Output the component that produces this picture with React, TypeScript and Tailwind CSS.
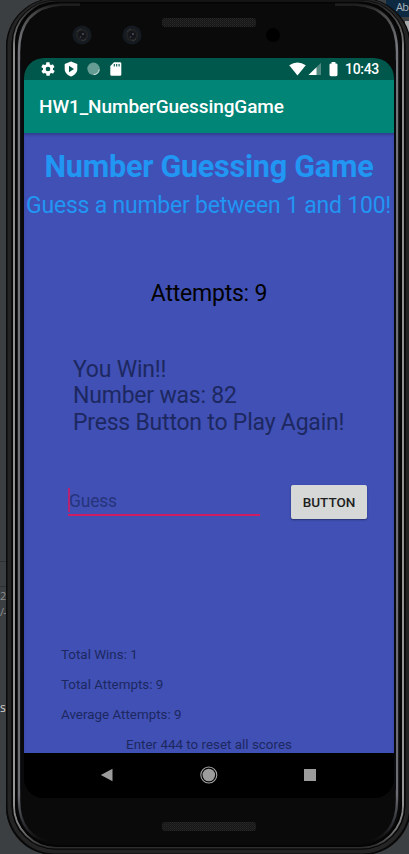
import React from "react";

function PhoneFrame() {
  return (
    <svg className="pointer-events-none absolute inset-0" width="409" height="854" viewBox="0 0 409 854" fill="none">
      <defs>
        <linearGradient id="rail" x1="0" y1="0" x2="0" y2="854" gradientUnits="userSpaceOnUse">
          <stop offset="0" stopColor="#222" />
          <stop offset="0.02" stopColor="#444" />
          <stop offset="0.06" stopColor="#8c8c8c" />
          <stop offset="0.93" stopColor="#969696" />
          <stop offset="0.97" stopColor="#777" />
          <stop offset="0.993" stopColor="#2c2c2c" />
        </linearGradient>
        <linearGradient id="inner" x1="0" y1="0" x2="0" y2="854" gradientUnits="userSpaceOnUse">
          <stop offset="0" stopColor="#0a0a0a" />
          <stop offset="0.015" stopColor="#444" />
          <stop offset="0.05" stopColor="#73757a" />
          <stop offset="0.93" stopColor="#6b6d72" />
          <stop offset="0.96" stopColor="#33353a" />
          <stop offset="0.985" stopColor="#0a0a0a" />
        </linearGradient>
      </defs>
      <rect x="7" y="-1" width="403" height="855" rx="48" stroke="#090909" strokeWidth="2" />
      <rect x="9.5" y="0.5" width="398" height="851" rx="46" stroke="#242424" strokeWidth="4" />
      <rect x="12.5" y="1" width="392" height="847.5" rx="43" stroke="#070707" strokeWidth="2" />
      <rect x="14" y="1.5" width="389" height="846" rx="42" stroke="url(#rail)" strokeWidth="2" />
      <rect x="16" y="2.5" width="385" height="843.5" rx="41" stroke="#050505" strokeWidth="2" />
      <path d="M80 4.5H62Q19 7 19 52V800Q19 838 54 843" stroke="url(#inner)" strokeWidth="2.4" />
      <path d="M335 4.5H355Q397 7 397 52V800Q397 838 363 843" stroke="url(#inner)" strokeWidth="2.4" />
      <path d="M21.5 60V790M395 60V790" stroke="#090a0d" strokeWidth="2" />
    </svg>
  );
}

function Speaker() {
  return (
    <svg width="94" height="10" viewBox="0 0 94 10">
      <defs>
        <pattern id="mesh" width="2" height="2" patternUnits="userSpaceOnUse">
          <rect width="2" height="2" fill="#171717" />
          <rect width="1" height="1" fill="#282828" />
          <rect x="1" y="1" width="1" height="1" fill="#202020" />
        </pattern>
      </defs>
      <rect width="94" height="9" rx="3" fill="url(#mesh)" />
    </svg>
  );
}

function Lens() {
  return (
    <svg width="20" height="20" viewBox="0 0 20 20">
      <circle cx="10" cy="10" r="9.6" fill="#141a1f" />
      <circle cx="10" cy="10" r="6.5" fill="#1f2123" />
      <circle cx="10" cy="10" r="4" fill="#14151a" />
      <path d="M5 7a6 6 0 0 1 4-3M14 14a6 6 0 0 1-4 2" stroke="#37383a" fill="none" />
      <circle cx="11" cy="9" r="1" fill="#50535b" />
      <circle cx="8.5" cy="12" r=".9" fill="#363a44" />
    </svg>
  );
}

function StatusBar() {
  return (
    <div className="flex h-[22px] shrink-0 items-center bg-[#00574b] pl-[16px] pr-[15px] text-white">
      <svg width="16" height="16" viewBox="0 0 24 24" fill="#fff">
        <path d="M19.4 13c0-.3.1-.6.1-1s0-.7-.1-1l2.1-1.6c.2-.2.3-.4.1-.7l-2-3.4c-.1-.2-.4-.3-.6-.2l-2.5 1c-.5-.4-1.1-.7-1.7-1l-.4-2.6c0-.3-.2-.5-.5-.5h-4c-.2 0-.5.2-.5.4l-.4 2.7c-.6.2-1.1.6-1.7 1l-2.5-1c-.2-.1-.4 0-.6.2l-2 3.4c-.1.3-.1.5.1.7L4.6 11c0 .3-.1.6-.1 1s0 .7.1 1l-2.1 1.6c-.2.2-.3.5-.1.7l2 3.4c.1.2.3.3.6.2l2.5-1c.5.4 1.1.8 1.7 1l.4 2.7c0 .2.2.4.5.4h4c.2 0 .5-.2.5-.4l.4-2.7c.6-.2 1.1-.6 1.7-1l2.5 1c.2.1.5 0 .6-.2l2-3.4c.1-.2.1-.5-.1-.7L19.4 13zM12 15.5a3.5 3.5 0 1 1 0-7 3.5 3.5 0 0 1 0 7z" />
      </svg>
      <svg className="ml-[8px]" width="14" height="16" viewBox="0 0 14 16">
        <path d="M7 .5 13.3 3v5c0 3.5-2.6 6.2-6.3 7.5C3.3 14.2.7 11.5.7 8V3z" fill="#fff" />
        <path d="M5 4.8 10 8l-5 3.2z" fill="#00574b" />
      </svg>
      <svg className="ml-[9px]" width="14" height="14" viewBox="0 0 14 14">
        <circle cx="6.5" cy="6.8" r="6.2" fill="#659d94" />
        <path d="M12.2 7.5a5.8 5.8 0 0 1-5.5 5.1" fill="none" stroke="#dce9e6" strokeWidth="1" />
      </svg>
      <svg className="-mt-px ml-[9px]" width="12" height="14" viewBox="0 0 12 14">
        <path d="M4 .2h6q1.3 0 1.3 1.3v11q0 1.3-1.3 1.3H1.5Q.3 13.8.3 12.5V4z" fill="#fff" />
        <path d="M4.3 2v2.5M6.7 2v2.5M9.1 2v2.5" stroke="#00574b" strokeWidth="1.1" />
      </svg>
      <svg className="ml-auto" width="17" height="14" viewBox="0 0 17 14">
        <path d="M.2 3.2Q8.5-2.2 16.8 3.2L8.5 13.6z" fill="#fff" />
      </svg>
      <svg className="ml-[2px]" width="14" height="14" viewBox="0 0 14 14">
        <path d="M13 .8V13H.5z" fill="#4f897f" />
        <path d="M8.5 5.2V13H.5z" fill="#fff" />
      </svg>
      <svg className="ml-[7px]" width="9" height="15" viewBox="0 0 9 15">
        <path d="M2.6 0h3.8v1.5H7q1.5 0 1.5 1.3v10q0 1.4-1.5 1.4H2Q.5 14.2.5 12.8v-10Q.5 1.5 2 1.5h.6z" fill="#fff" />
      </svg>
      <span className="ml-[7px] w-[34px] whitespace-nowrap text-[14px] font-medium leading-[22px] tracking-[-0.3px]">10:43</span>
    </div>
  );
}

function GameScreen() {
  return (
    <main className="flex h-[620px] shrink-0 flex-col bg-[#4050b5] text-[#1d2860] shadow-[inset_0_3px_3px_-1px_#303d8d]">
      <h1 className="mt-[16px] h-[36px] whitespace-nowrap text-center text-[30.6px] font-bold leading-[36px] tracking-[-0.27px] text-[#2196f3]">Number Guessing Game</h1>
      <p className="mt-[7px] h-[28px] whitespace-nowrap pl-[2px] text-[23px] leading-[28px] tracking-[-0.22px] text-[#2196f3]">Guess a number between 1 and 100!</p>
      <p className="mt-[60px] h-[28px] text-center text-[23px] leading-[28px] tracking-[-0.22px] text-black">Attempts: 9</p>
      <p className="ml-[49px] mt-[49px] h-[80px] whitespace-pre text-[23px] leading-[26.4px] tracking-[-0.21px]">{"You Win!!\nNumber was: 82\nPress Button to Play Again!"}</p>
      <div className="mt-[48px] flex h-[34px]">
        <div className="ml-[44px] mt-[3px] h-[28px] w-[192px] border-b-2 border-[#cf1d63]">
          <div className="h-[24px] border-l-2 border-[#b62370] text-[17.5px] leading-[26px] tracking-[-0.2px] text-[#27347c]">
            <span className="-ml-px">Guess</span>
          </div>
        </div>
        <button className="ml-[31px] h-[34px] w-[76px] rounded-[2px] bg-[#d6d7d7] text-[13.5px] font-medium text-[#202121] shadow-[0_1px_2px_#27336f]">BUTTON</button>
      </div>
      <div className="ml-[37px] mt-[126px] flex flex-col gap-[10px] text-[13.4px] leading-[20px]">
        <p>Total Wins: 1</p>
        <p>Total Attempts: 9</p>
        <p>Average Attempts: 9</p>
      </div>
      <p className="mt-[10px] h-[16px] text-center text-[13.4px] leading-[20px]">Enter 444 to reset all scores</p>
    </main>
  );
}

function NavBar() {
  return (
    <nav className="flex h-[45px] shrink-0 items-center bg-black pb-px pl-[76px]">
      <svg width="13" height="14" viewBox="0 0 13 14"><path d="M12.5.7v12.6L.8 7z" fill="#9c9c9c" /></svg>
      <svg className="ml-[87px]" width="18" height="18" viewBox="0 0 18 18">
        <circle cx="8.8" cy="9" r="8" fill="none" stroke="#a5a5a5" strokeWidth="1.1" />
        <circle cx="8.8" cy="9" r="6.3" fill="#9c9c9c" />
      </svg>
      <div className="ml-[86px] size-[12px] bg-[#9c9c9c]" />
    </nav>
  );
}

export default function App() {
  return (
    <div className="relative h-[854px] w-[409px] overflow-hidden bg-[#3c3f41] font-['Roboto',sans-serif]">
      <div className="absolute right-0 top-0 h-[17px] w-[23px] bg-[#0e2a42] pl-[10px] font-['Open_Sans',sans-serif] text-[11px] leading-[13px] tracking-[-0.6px] text-[#a9b4bd]">Ab</div>
      <div className="absolute right-0 top-[21px] h-[12px] w-[4px] bg-[#a6a9ac]" />
      <div className="absolute left-0 top-[561px] h-[26px] w-[8px] border-y border-[#2d2f30]" />
      <div className="absolute left-0 top-[588px] font-['Open_Sans',sans-serif] text-[11px] leading-[16px] tracking-[-0.8px] text-[#8b8d8e]">2<br />/-</div>
      <div className="absolute left-0 top-[700px] font-['Open_Sans',sans-serif] text-[12px] leading-[16px] text-[#ced0d1]">s</div>
      <div className="relative ml-[6px] h-[855px] w-[405px] rounded-[48px] bg-[#0a0a0a] pl-[18px]">
        <header className="flex h-[58px] items-start">
          <div className="ml-[48px] mt-[25px]"><Lens /></div>
          <div className="ml-[30px] mt-[25px]"><Lens /></div>
          <div className="ml-[20px] mt-[18px]"><Speaker /></div>
          <div className="ml-[10px] mt-[28px] size-[14px] rounded-full bg-black" />
        </header>
        <div className="flex h-[740px] w-[370px] flex-col overflow-hidden rounded-[20px] bg-black">
          <StatusBar />
          <div className="flex h-[53px] shrink-0 items-center bg-[#008577] pl-[15px] pt-[2px] text-[19px] font-medium tracking-[-0.1px] text-white">HW1_NumberGuessingGame</div>
          <GameScreen />
          <NavBar />
        </div>
        <div className="ml-[138px] mt-[24px]"><Speaker /></div>
      </div>
      <PhoneFrame />
    </div>
  );
}
